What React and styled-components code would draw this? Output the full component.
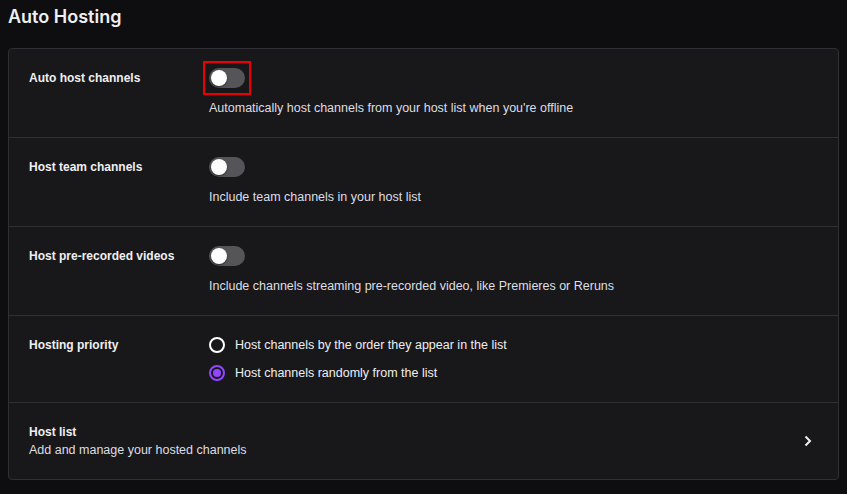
import React, { useState } from "react";
import styled, { createGlobalStyle } from "styled-components";

const Global = createGlobalStyle`
  html, body { margin: 0; padding: 0; background: #0e0e10; }
  body { font-family: "Liberation Sans", Arial, sans-serif; color: #efeff1; }
  * { box-sizing: border-box; }
`;

const Page = styled.div`
  padding: 0 8px 8px;
`;

const Title = styled.h2`
  margin: 0 0 19px;
  padding-top: 5px;
  font-family: Inter, "Noto Sans", sans-serif;
  font-size: 18px;
  line-height: 24px;
  font-weight: 600;
  color: #efeff1;
`;

const Card = styled.div`
  background: #18181b;
  border: 1px solid #2f2f35;
  border-radius: 4px;
`;

const Row = styled.div`
  display: grid;
  grid-template-columns: 180px 1fr;
  padding: 20px;
  border-top: ${(p) => (p.$first ? "none" : "1px solid #2f2f35")};
`;

const LinkRow = styled.div`
  display: flex;
  align-items: center;
  justify-content: space-between;
  padding: 20px;
  border-top: 1px solid #2f2f35;
  cursor: pointer;
`;

const Label = styled.div`
  font-size: 12px;
  line-height: 18px;
  font-weight: 700;
  color: #efeff1;
`;

const Desc = styled.div`
  font-size: 12.5px;
  line-height: 18px;
  color: #dedee3;
  margin-top: ${(p) => p.$mt || 0}px;
`;

const Control = styled.div`
  display: flex;
  flex-direction: column;
  align-items: flex-start;
`;

const Highlight = styled.div`
  padding: 5px 4px;
  margin: -8px 0 -6px -6px;
  border: 2px solid ${(p) => (p.$on ? "#e00" : "transparent")};
`;

const Track = styled.button`
  width: 36px;
  height: 20px;
  border-radius: 10px;
  border: none;
  padding: 2px;
  background: ${(p) => (p.$on ? "#9147ff" : "#545459")};
  display: flex;
  justify-content: ${(p) => (p.$on ? "flex-end" : "flex-start")};
  cursor: pointer;
`;

const Knob = styled.span`
  width: 16px;
  height: 16px;
  border-radius: 50%;
  background: #ffffff;
  box-shadow: 0 1px 2px rgba(0,0,0,0.5);
`;

const RadioList = styled.div`
  display: flex;
  flex-direction: column;
  gap: 10px;
`;

const RadioItem = styled.label`
  display: flex;
  align-items: center;
  gap: 10px;
  font-size: 12.5px;
  line-height: 18px;
  color: #efeff1;
  cursor: pointer;
`;

const RadioCircle = styled.span`
  width: 16px;
  height: 16px;
  border-radius: 50%;
  border: 2px solid ${(p) => (p.$checked ? "#9147ff" : "#ffffff")};
  display: flex;
  align-items: center;
  justify-content: center;
  &::after {
    content: "";
    width: 8px;
    height: 8px;
    border-radius: 50%;
    background: ${(p) => (p.$checked ? "#9147ff" : "transparent")};
  }
`;

const LinkText = styled.div`
  display: flex;
  flex-direction: column;
`;

const Chevron = styled.svg`
  width: 20px;
  height: 20px;
`;

function Toggle({ on, highlight }) {
  return (
    <Highlight $on={highlight}>
      <Track $on={on}>
        <Knob />
      </Track>
    </Highlight>
  );
}

export default function App() {
  const [prio, setPrio] = useState(1);
  return (
    <Page>
      <Global />
      <Title>Auto Hosting</Title>
      <Card>
        <Row $first>
          <Label>Auto host channels</Label>
          <Control>
            <Toggle highlight />
            <Desc $mt={10}>Automatically host channels from your host list when you're offline</Desc>
          </Control>
        </Row>
        <Row>
          <Label>Host team channels</Label>
          <Control>
            <Toggle />
            <Desc $mt={10}>Include team channels in your host list</Desc>
          </Control>
        </Row>
        <Row>
          <Label>Host pre-recorded videos</Label>
          <Control>
            <Toggle />
            <Desc $mt={10}>Include channels streaming pre-recorded video, like Premieres or Reruns</Desc>
          </Control>
        </Row>
        <Row>
          <Label>Hosting priority</Label>
          <RadioList>
            <RadioItem onClick={() => setPrio(0)}>
              <RadioCircle $checked={prio === 0} />
              Host channels by the order they appear in the list
            </RadioItem>
            <RadioItem onClick={() => setPrio(1)}>
              <RadioCircle $checked={prio === 1} />
              Host channels randomly from the list
            </RadioItem>
          </RadioList>
        </Row>
        <LinkRow>
          <LinkText>
            <Label>Host list</Label>
            <Desc>Add and manage your hosted channels</Desc>
          </LinkText>
          <Chevron viewBox="0 0 20 20">
            <path d="M7.5 5.5 L12 10 L7.5 14.5" fill="none" stroke="#efeff1" strokeWidth="2" />
          </Chevron>
        </LinkRow>
      </Card>
    </Page>
  );
}
